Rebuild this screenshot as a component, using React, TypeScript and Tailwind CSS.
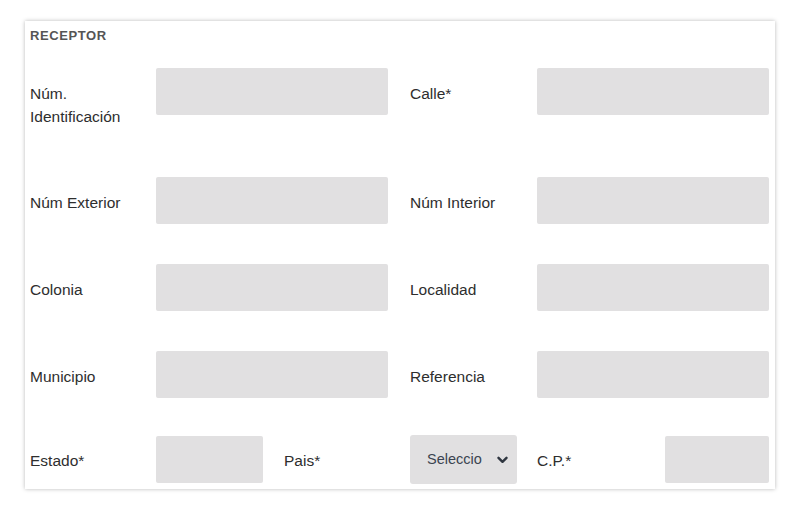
import React from "react";

const labelCls =
  "shrink-0 pt-[14px] leading-[23px] text-[15.5px] text-[#2e2e2e]";
const inputCls = "shrink-0 h-[47px] rounded-[2px] bg-[#e1e0e1]";

function Row({
  l1,
  l2,
  mt,
}: {
  l1: React.ReactNode;
  l2: React.ReactNode;
  mt: string;
}) {
  return (
    <div className={`flex items-start ${mt}`}>
      <div className={`${labelCls} w-[126px]`}>{l1}</div>
      <div className={`${inputCls} w-[232px]`} />
      <div className={`${labelCls} w-[127px] ml-[22px]`}>{l2}</div>
      <div className={`${inputCls} w-[232px]`} />
    </div>
  );
}

export default function App() {
  return (
    <div className="w-[800px] h-[515px] bg-white pt-[21px] pl-[25px] font-['Liberation_Sans',Arial,sans-serif]">
      <div className="w-[750px] h-[468px] bg-white shadow-[0_0_4px_rgba(0,0,0,0.28)] pt-[7px] px-[5px]">
        <div className="h-[16px] leading-[16px] text-[13px] font-bold tracking-[0.6px] text-[#555555]">
          RECEPTOR
        </div>
        <div className="mt-[24px]">
          <div className="flex items-start">
            <div className={`${labelCls} w-[126px]`}>
              Núm.
              <br />
              Identificación
            </div>
            <div className={`${inputCls} w-[232px]`} />
            <div className={`${labelCls} w-[127px] ml-[22px]`}>Calle*</div>
            <div className={`${inputCls} w-[232px]`} />
          </div>
          <Row l1="Núm Exterior" l2="Núm Interior" mt="mt-[49px]" />
          <Row l1="Colonia" l2="Localidad" mt="mt-[40px]" />
          <Row l1="Municipio" l2="Referencia" mt="mt-[40px]" />
          <div className="flex items-start mt-[37px]">
            <div className={`${labelCls} w-[126px]`}>Estado*</div>
            <div className={`${inputCls} w-[107px] mt-[1px]`} />
            <div className={`${labelCls} w-[126px] ml-[21px]`}>Pais*</div>
            <div className="shrink-0 w-[107px] h-[49px] rounded-[3px] bg-[#e1e0e1] flex items-center pl-[17px] pr-[9px]">
              <span className="text-[14.5px] text-[#3b4450] flex-1">
                Seleccio
              </span>
              <svg width="11" height="8" viewBox="0 0 11 8">
                <path
                  d="M1.5 1.8 L5.5 5.8 L9.5 1.8"
                  fill="none"
                  stroke="#2f3640"
                  strokeWidth="2.4"
                  strokeLinecap="round"
                  strokeLinejoin="round"
                />
              </svg>
            </div>
            <div className={`${labelCls} w-[128px] ml-[20px]`}>C.P.*</div>
            <div className={`${inputCls} w-[104px] mt-[1px]`} />
          </div>
        </div>
      </div>
    </div>
  );
}
